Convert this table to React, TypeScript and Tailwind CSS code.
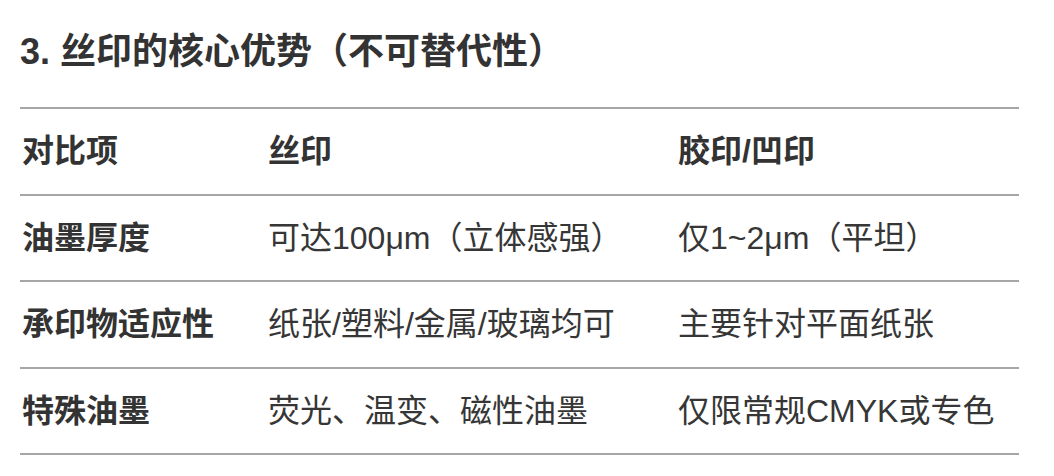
const rows = [
  ['油墨厚度', '可达100μm（立体感强）', '仅1~2μm（平坦）'],
  ['承印物适应性', '纸张/塑料/金属/玻璃均可', '主要针对平面纸张'],
  ['特殊油墨', '荧光、温变、磁性油墨', '仅限常规CMYK或专色'],
];

const font = {
  fontFamily: '"Liberation Sans", "Noto Sans CJK SC", sans-serif',
};

export default function App() {
  return (
    <div className="min-h-[476px] w-[1054px] bg-white pl-[20px] pt-[29px] text-[#333333]" style={font}>
      <h2 className="mb-[32px] text-[36px] font-bold leading-[46px]">
        3. 丝印的核心优势（不可替代性）
      </h2>

      <div className="w-[999px] border-t-2 border-[#a6a6a6]">
        {/* header */}
        <div className="grid h-[86.5px] grid-cols-[246px_410px_1fr] items-center border-b-2 border-[#a6a6a6] pl-[2px] text-[32px] font-bold">
          <div>对比项</div>
          <div>丝印</div>
          <div>胶印/凹印</div>
        </div>

        {rows.map((r, i) => (
          <div
            key={i}
            className="grid h-[86.5px] grid-cols-[246px_410px_1fr] items-center border-b-2 border-[#a6a6a6] pl-[2px] text-[32px] text-[#363636]"
          >
            <div className="font-bold text-[#333333]">{r[0]}</div>
            <div>{r[1]}</div>
            <div>{r[2]}</div>
          </div>
        ))}
      </div>
    </div>
  );
}
